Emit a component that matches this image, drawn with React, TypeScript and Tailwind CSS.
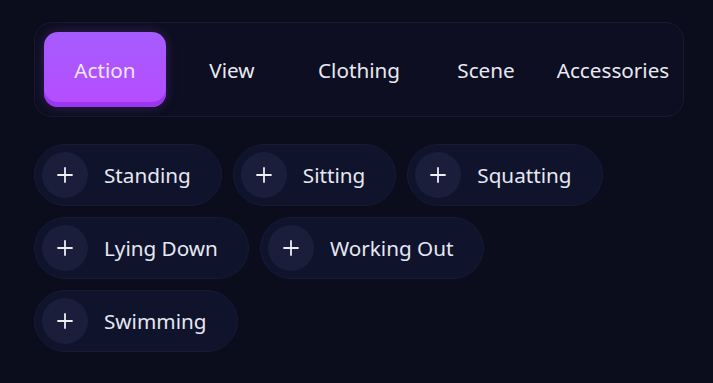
import { Plus } from "lucide-react";

const tabs = ["Action", "View", "Clothing", "Scene", "Accessories"];
const rows = [
  ["Standing", "Sitting", "Squatting"],
  ["Lying Down", "Working Out"],
  ["Swimming"],
];

export default function App() {
  return (
    <div
      className="min-h-screen w-full bg-[#0b0c1c] px-[34px] pt-[22px]"
      style={{ fontFamily: '"Noto Sans", "Open Sans", sans-serif' }}
    >
      {/* Tabs */}
      <div className="w-[650px] rounded-[18px] border border-[#181a30] bg-[#0d0e21] p-[9px]">
        <div className="grid grid-cols-5 gap-[5px]">
          {tabs.map((t, i) => (
            <button
              key={t}
              className={
                i === 0
                  ? "h-[75px] rounded-[14px] bg-gradient-to-b from-[#a55bff] to-[#b64cff] pt-[2px] text-[20.7px] text-[#f1e6ff] shadow-[inset_0_-5px_0_#9a36f0,0_0_12px_rgba(168,85,247,0.25)]"
                  : "h-[75px] pt-[2px] text-[20.7px] text-[#e8e9f2]"
              }
            >
              {t}
            </button>
          ))}
        </div>
      </div>

      {/* Chips */}
      <div className="mt-[27px] flex flex-col gap-[11px]">
        {rows.map((row, r) => (
          <div key={r} className="flex gap-[11px]">
            {row.map((c) => (
              <div
                key={c}
                className="flex h-[62px] items-center gap-[16px] rounded-full border border-[#161a36] bg-[#10132c] pl-[7px] pr-[30px]"
              >
                <div className="flex h-[46px] w-[46px] items-center justify-center rounded-full bg-[#1a1e3b]">
                  <Plus size={24} strokeWidth={1.8} className="text-[#eceef6]" />
                </div>
                <span className="pt-[2px] text-[20.7px] text-[#e6e8f2]">{c}</span>
              </div>
            ))}
          </div>
        ))}
      </div>
    </div>
  );
}
